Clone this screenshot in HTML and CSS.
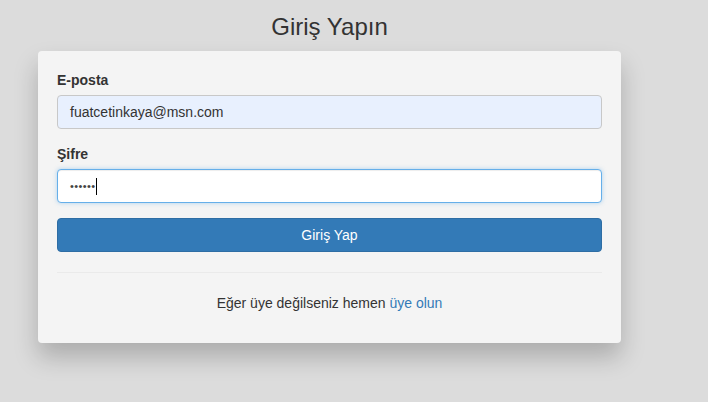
FILE: index.html
```html
<!DOCTYPE html>
<html lang="tr">
<head>
<meta charset="utf-8">
<title>Giriş Yapın</title>
<link rel="stylesheet" href="styles.css">
</head>
<body>
<div class="wrap">
  <h2 class="title">Giriş Yapın</h2>
  <div class="card">
    <div class="group">
      <label class="label">E-posta</label>
      <div class="field autofill">fuatcetinkaya@msn.com</div>
    </div>
    <div class="group">
      <label class="label">Şifre</label>
      <div class="field focus"><span class="dots">••••••</span><span class="caret"></span></div>
    </div>
    <button class="btn">Giriş Yap</button>
    <hr class="sep">
    <p class="foot">Eğer üye değilseniz hemen <a class="link" href="#">üye olun</a></p>
  </div>
</div>
</body>
</html>
```

FILE: styles.css
```css
html, body {
  margin: 0;
  padding: 0;
  background: #dcdcdc;
  font-family: "Liberation Sans", Arial, sans-serif;
  font-size: 14px;
  color: #333;
  line-height: 20px;
}
body {
  min-height: 402px;
}
.wrap {
  width: 583px;
  margin-left: 38px;
  padding-top: 14px;
  padding-bottom: 60px;
}
.title {
  margin: 0 0 11px;
  font-size: 24px;
  font-weight: normal;
  line-height: 26px;
  text-align: center;
  color: #333;
}
.card {
  background: #f4f4f4;
  border-radius: 4px;
  padding: 19px 19px 30px;
  box-shadow: 0 14px 24px rgba(0,0,0,0.22);
}
.group {
  margin-bottom: 15px;
}
.label {
  display: block;
  font-weight: bold;
  margin-bottom: 5px;
}
.field {
  box-sizing: border-box;
  height: 34px;
  border: 1px solid #ccc;
  border-radius: 4px;
  padding: 6px 12px;
  display: flex;
  align-items: center;
  background: #fff;
  color: #333;
}
.autofill {
  background: #e8f0fe;
  border-color: #c8c8c8;
}
.focus {
  border-color: #66afe9;
  box-shadow: inset 0 1px 1px rgba(0,0,0,.075), 0 0 4px rgba(102,175,233,.5);
}
.dots {
  font-size: 11px;
  letter-spacing: 0.4px;
  color: #444;
}
.caret {
  display: inline-block;
  width: 1px;
  height: 17px;
  background: #000;
  margin-left: 0;
}
.btn {
  display: block;
  width: 100%;
  height: 34px;
  box-sizing: border-box;
  border: 1px solid #2e6da4;
  border-radius: 4px;
  background: #337ab7;
  color: #fff;
  font-family: inherit;
  font-size: 14px;
  padding: 0;
}
.sep {
  margin: 20px 0;
  border: 0;
  border-top: 1px solid #eaeaea;
}
.foot {
  margin: 0;
  text-align: center;
}
.link {
  color: #337ab7;
  text-decoration: none;
}
```
